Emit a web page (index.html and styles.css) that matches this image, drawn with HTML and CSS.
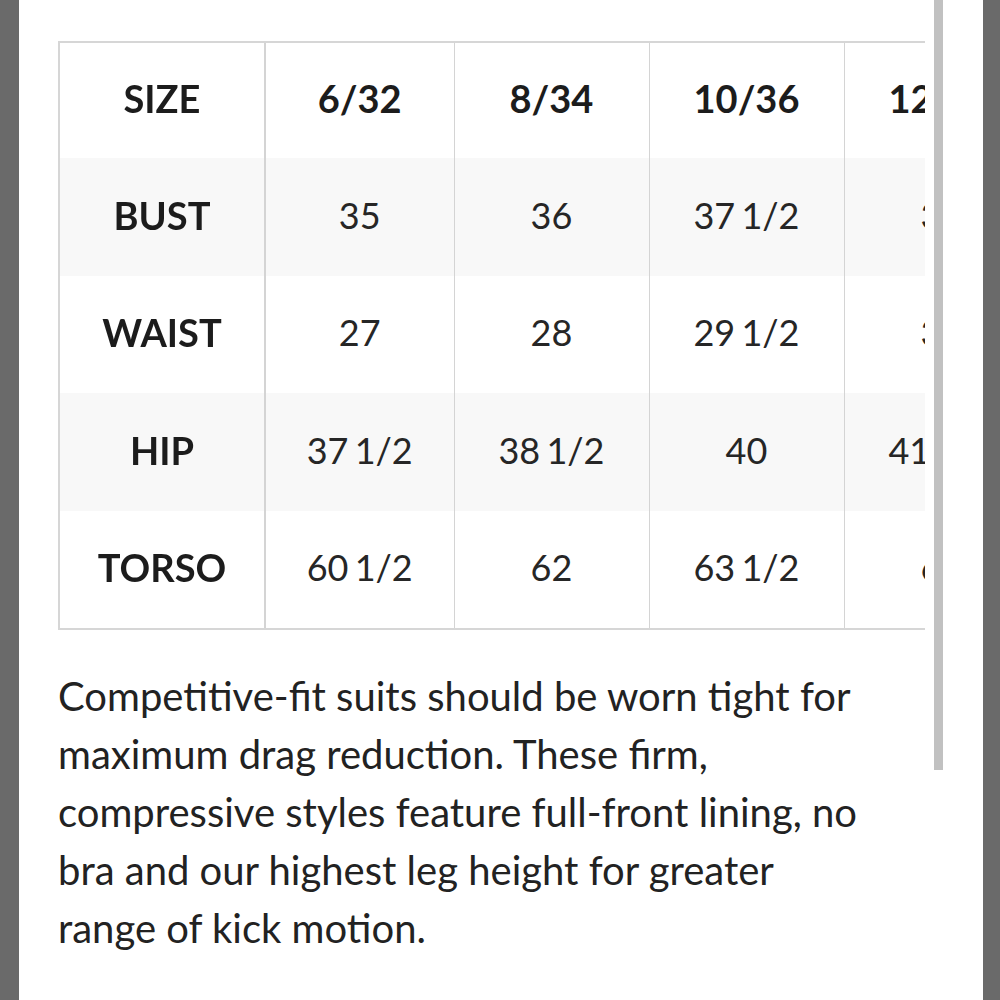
FILE: index.html
```html
<!DOCTYPE html>
<html lang="en">
<head>
<meta charset="utf-8">
<title>Size chart</title>
<link rel="stylesheet" href="styles.css">
</head>
<body>
<div class="screen">
  <div class="content">
    <div class="table-scroll">
      <table class="size-table">
        <colgroup>
          <col class="c-label"><col class="c-a"><col class="c-b"><col class="c-b"><col class="c-b"><col class="c-b">
        </colgroup>
        <tr class="row head">
          <th class="label">SIZE</th><th>6/32</th><th>8/34</th><th>10/36</th><th>12/38</th><th>14/40</th>
        </tr>
        <tr class="row alt">
          <th class="label">BUST</th><td>35</td><td>36</td><td>37 1/2</td><td>39</td><td>40 1/2</td>
        </tr>
        <tr class="row">
          <th class="label">WAIST</th><td>27</td><td>28</td><td>29 1/2</td><td>31</td><td>32 1/2</td>
        </tr>
        <tr class="row alt">
          <th class="label">HIP</th><td>37 1/2</td><td>38 1/2</td><td>40</td><td>41 1/2</td><td>43</td>
        </tr>
        <tr class="row">
          <th class="label">TORSO</th><td>60 1/2</td><td>62</td><td>63 1/2</td><td>65</td><td>66 1/2</td>
        </tr>
      </table>
    </div>
    <p class="desc">Competitive-fit suits should be worn tight for maximum drag reduction. These firm, compressive styles feature full-front lining, no bra and our highest leg height for greater range of kick motion.</p>
  </div>
  <div class="scrollbar"></div>
</div>
</body>
</html>
```

FILE: styles.css
```css
html, body {
  margin: 0;
  padding: 0;
  height: 100%;
}
body {
  background: #6a6a6a;
  font-family: "Lato", "Inter", sans-serif;
  color: #1e1e1e;
}
.screen {
  position: relative;
  margin: 0 17px 0 19px;
  height: 1000px;
  background: #ffffff;
  overflow: hidden;
}
.content {
  padding: 41px 0 0 39px;
}
.table-scroll {
  width: 865px;
  overflow: hidden;
  border-top: 2px solid #d6d6d6;
  border-bottom: 2px solid #d6d6d6;
  border-left: 2px solid #d6d6d6;
}
.size-table {
  border-collapse: collapse;
  table-layout: fixed;
  width: 1169px;
}
.c-label { width: 205px; }
.c-a { width: 189px; }
.c-b { width: 195px; }
.row { height: 117.5px; }
.row.head { height: 115px; }
.row.alt { background: #f8f8f8; }
.size-table th,
.size-table td {
  padding: 0 0 4px 0;
  text-align: center;
  vertical-align: middle;
  border-right: 1px solid #d4d4d4;
  white-space: nowrap;
}
.size-table th {
  font-size: 38px;
  font-weight: 700;
  color: #1c1c1c;
}
.row.head th { padding-bottom: 6px; }
.size-table td {
  font-size: 36px;
  font-weight: 400;
  word-spacing: -3px;
  color: #262626;
}
.size-table .label {
  position: sticky;
  left: 0;
  border-right: 2px solid #d4d4d4;
  box-shadow: 4px 0 5px -2px rgba(0, 0, 0, 0.08);
  background: #ffffff;
}
.row.alt .label { background: #f8f8f8; }
.desc {
  margin: 37px 0 0 0;
  width: 810px;
  font-size: 40px;
  line-height: 58px;
  color: #222222;
}
.scrollbar {
  position: absolute;
  top: 0;
  left: 915px;
  width: 9px;
  height: 770px;
  background: #c1c1c1;
}
```
